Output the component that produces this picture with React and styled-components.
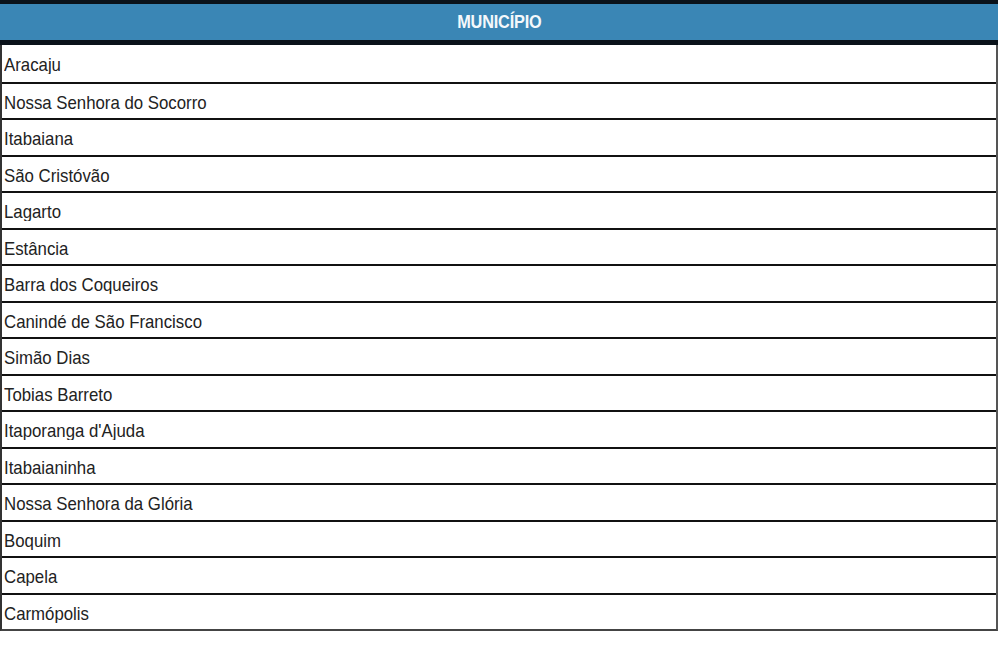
import React from "react"
import styled, { createGlobalStyle } from "styled-components"

const GlobalStyle = createGlobalStyle`
  html, body {
    margin: 0;
    padding: 0;
    background: #fff;
  }
`

const Table = styled.div`
  width: 998px;
  display: flex;
  flex-direction: column;
  font-family: "Liberation Sans", Arial, sans-serif;
`

const Header = styled.div`
  height: 36px;
  border-top: 4px solid #0a121a;
  border-bottom: 5px solid #0a121a;
  background: #3a86b5;
  display: flex;
  align-items: center;
  justify-content: center;
  color: #f4f8fb;
  font-weight: bold;
  font-size: 16px;
  letter-spacing: -0.2px;
`

const Title = styled.span`
  display: inline-block;
  transform: scale(1.02, 1.2);
`

const Body = styled.div`
  display: flex;
  flex-direction: column;
  border-left: 2px solid #333;
  border-right: 2px solid #555;
  border-bottom: 2px solid #444;
`

const Row = styled.div`
  height: 36.5px;
  border-top: ${p => (p.$first ? "none" : "2px solid #111")};
  display: flex;
  align-items: center;
  padding: 4px 0 0 2px;
  box-sizing: border-box;
  color: #222;
  font-size: 16px;
`

const Name = styled.span`
  display: inline-block;
  transform: scale(1.05, 1.12);
  transform-origin: left center;
`

const cities = [
  "Aracaju",
  "Nossa Senhora do Socorro",
  "Itabaiana",
  "São Cristóvão",
  "Lagarto",
  "Estância",
  "Barra dos Coqueiros",
  "Canindé de São Francisco",
  "Simão Dias",
  "Tobias Barreto",
  "Itaporanga d'Ajuda",
  "Itabaianinha",
  "Nossa Senhora da Glória",
  "Boquim",
  "Capela",
  "Carmópolis",
]

const App = () => (
  <>
    <GlobalStyle />
    <Table>
      <Header>
        <Title>MUNICÍPIO</Title>
      </Header>
      <Body>
        {cities.map((c, i) => (
          <Row key={c} $first={i === 0}>
            <Name>{c}</Name>
          </Row>
        ))}
      </Body>
    </Table>
  </>
)

export default App
